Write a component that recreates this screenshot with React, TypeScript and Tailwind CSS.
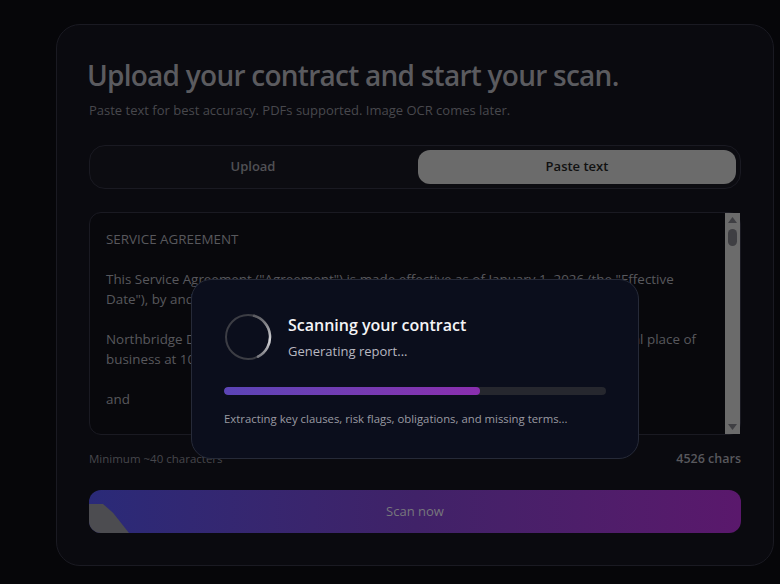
import React, { useState } from 'react';

const CONTRACT = `SERVICE AGREEMENT

This Service Agreement ("Agreement") is made effective as of January 1, 2026 (the "Effective Date"), by and between:

Northbridge Data Solutions LLC, a Delaware limited liability company, with its principal place of business at 1000 Market Street, Suite 400, San Francisco, CA 94103 ("Provider");

and

Alta Forge Consulting Inc., a California corporation, with its principal place of business at 250 Harbor Drive, Oakland, CA 94607 ("Client").

1. SERVICES
Provider agrees to perform the services described in Exhibit A (the "Services") in a professional and workmanlike manner.`;

function Spinner() {
  return (
    <svg width="48" height="48" viewBox="0 0 48 48" className="shrink-0">
      <defs>
        <linearGradient id="arc" x1="0" y1="0" x2="0" y2="1">
          <stop offset="0" stopColor="#5a5a60" />
          <stop offset="0.6" stopColor="#d6d6da" />
          <stop offset="1" stopColor="#7a7a80" />
        </linearGradient>
      </defs>
      <circle cx="24" cy="24" r="22" fill="none" stroke="#3c3d44" strokeWidth="2" />
      <path d="M 30 2.8 A 22 22 0 0 1 34 43.6" fill="none" stroke="url(#arc)" strokeWidth="2.5" strokeLinecap="round" />
    </svg>
  );
}

function ScrollTrack() {
  return (
    <div className="pointer-events-none absolute bottom-px right-px top-px flex w-[15px] flex-col items-center bg-[#6b6b6b]">
      <svg width="9" height="6" viewBox="0 0 9 6" className="mt-[4px]">
        <path d="M4.5 0 L9 6 L0 6 Z" fill="#3f3f43" />
      </svg>
      <div className="mt-[6px] h-[17px] w-[9px] rounded-full bg-[#3f3f43]" />
      <div className="flex-1" />
      <svg width="9" height="6" viewBox="0 0 9 6" className="mb-[4px]">
        <path d="M0 0 L9 0 L4.5 6 Z" fill="#3f3f43" />
      </svg>
    </div>
  );
}

export default function App() {
  const [tab, setTab] = useState<'upload' | 'paste'>('paste');
  const [text, setText] = useState(CONTRACT);

  return (
    <div className="relative min-h-[584px] w-[780px] overflow-hidden bg-[#060609] font-['Open_Sans',sans-serif]">
      <div className="ml-[56px] mt-6 w-[718px] rounded-[24px] border border-[#1a1a22] bg-[#0a0a0f] px-8 pb-8 pt-[30px]">
        <h1 className="-ml-[2px] text-[28px] font-semibold leading-[40px] tracking-[-0.75px] text-[#5b5b5f]">
          Upload your contract and start your scan.
        </h1>
        <p className="mt-[5px] text-[13px] leading-5 text-[#48484d]">
          Paste text for best accuracy. PDFs supported. Image OCR comes later.
        </p>

        <div className="mt-[25px] flex h-[44px] items-stretch gap-1.5 rounded-2xl border border-[#1a1a22] bg-[#0c0c11] p-1">
          <button
            onClick={() => setTab('upload')}
            className={`flex-1 rounded-xl text-[13px] font-semibold ${tab === 'upload' ? 'bg-[#6b6b6b] text-[#111]' : 'text-[#515155]'}`}
          >
            Upload
          </button>
          <button
            onClick={() => setTab('paste')}
            className={`flex-1 rounded-xl text-[13px] font-semibold ${tab === 'paste' ? 'bg-[#6b6b6b] text-[#111]' : 'text-[#515155]'}`}
          >
            Paste text
          </button>
        </div>

        <div className="relative mt-[23px]">
          <textarea
            value={text}
            onChange={(e) => setText(e.target.value)}
            className="block h-[223px] w-full resize-none overflow-hidden rounded-xl border border-[#1a1a22] bg-[#08080c] py-4 pl-4 pr-[31px] text-[13.4px] leading-5 text-[#58585d] outline-none"
          />
          <ScrollTrack />
        </div>

        <div className="mt-4 flex items-center justify-between leading-4">
          <span className="text-[11.5px] text-[#47474c]">Minimum ~40 characters</span>
          <span className="text-[12.5px] font-semibold text-[#58585d]">{text.length > 0 ? '4526' : '0'} chars</span>
        </div>

        <button className="relative mt-[23px] flex h-[43px] w-full items-center justify-center overflow-hidden rounded-xl bg-gradient-to-r from-[#2a2a78] via-[#402268] to-[#5a186c] text-[13px] text-[#77777c]">
          <span className="absolute bottom-0 left-0 h-[29px] w-[40px] bg-[#4c4c50] [clip-path:polygon(0_0,35%_0,60%_30%,100%_100%,0_100%)]" />
          <span className="relative">Scan now</span>
        </button>
      </div>

      <div className="absolute left-[191px] top-[279px] w-[448px] rounded-[20px] border border-[#262a38] bg-[#0b0e1c] px-8 pb-[31px] pt-[33px]">
        <div className="flex items-center gap-[16px]">
          <Spinner />
          <div>
            <div className="text-[16px] font-semibold leading-6 text-[#f4f4f6]">Scanning your contract</div>
            <div className="mt-[4px] text-[13px] leading-5 text-[#b8b8c0]">Generating report...</div>
          </div>
        </div>
        <div className="mt-[26px] h-2 w-full overflow-hidden rounded-full bg-[#26272e]">
          <div className="h-full rounded-full bg-gradient-to-r from-[#5b44b6] to-[#8a2eae]" style={{ width: '67%' }} />
        </div>
        <p className="mt-4 text-[11.35px] leading-4 text-[#9a9aa2]">
          Extracting key clauses, risk flags, obligations, and missing terms...
        </p>
      </div>
    </div>
  );
}
